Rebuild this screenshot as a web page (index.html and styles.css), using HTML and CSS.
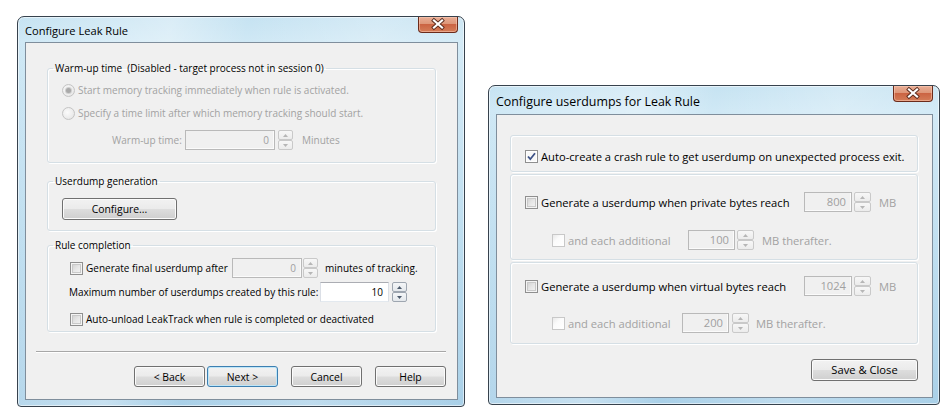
FILE: index.html
```html
<!DOCTYPE html>
<html>
<head>
<meta charset="utf-8">
<title>Configure Leak Rule</title>
<link rel="stylesheet" href="styles.css">
</head>
<body>
<section class="win win-leak">
  <header class="titlebar">
    <span class="title">Configure Leak Rule</span>
    <span class="close"><svg viewBox="0 0 40 16" width="40" height="16"><path d="M16 4.5L24 11.5M24 4.5L16 11.5" stroke="#5a2a1c" stroke-width="4" stroke-linecap="square" fill="none"/><path d="M16 4.5L24 11.5M24 4.5L16 11.5" stroke="#fff" stroke-width="2.2" stroke-linecap="square" fill="none"/></svg></span>
  </header>
  <div class="client client-leak">
    <fieldset class="group g-warm">
      <legend>Warm-up time&nbsp; (Disabled - target process not in session 0)</legend>
      <div class="rows">
        <div class="row dis"><span class="radio on"></span><span class="txt">Start memory tracking immediately when rule is activated.</span></div>
        <div class="row dis"><span class="radio"></span><span class="txt">Specify a time limit after which memory tracking should start.</span></div>
        <div class="row dis row-warm"><span class="lbl lw-warm">Warm-up time:</span><span class="input off iw-90">0</span><span class="spin off sp-3"><span class="sb"><svg viewBox="0 0 5 3" width="5" height="3"><path d="M0 3L2.5 0L5 3z"/></svg></span><span class="sb"><svg viewBox="0 0 5 3" width="5" height="3"><path d="M0 0L2.5 3L5 0z"/></svg></span></span><span class="unit u-9">Minutes</span></div>
      </div>
    </fieldset>
    <fieldset class="group g-dump">
      <legend>Userdump generation</legend>
      <div class="rows">
        <button class="btn btn-configure" type="button">Configure...</button>
      </div>
    </fieldset>
    <fieldset class="group g-comp">
      <legend>Rule completion</legend>
      <div class="rows">
        <div class="row"><span class="check"></span><span class="lbl lw-final">Generate final userdump after</span><span class="input off iw-70">0</span><span class="spin off sp-1"><span class="sb"><svg viewBox="0 0 5 3" width="5" height="3"><path d="M0 3L2.5 0L5 3z"/></svg></span><span class="sb"><svg viewBox="0 0 5 3" width="5" height="3"><path d="M0 0L2.5 3L5 0z"/></svg></span></span><span class="unit u-7">minutes of tracking.</span></div>
        <div class="row row-max"><span class="lbl lw-max">Maximum number of userdumps created by this rule:</span><span class="input iw-69">10</span><span class="spin sp-3"><span class="sb"><svg viewBox="0 0 5 3" width="5" height="3"><path d="M0 3L2.5 0L5 3z"/></svg></span><span class="sb"><svg viewBox="0 0 5 3" width="5" height="3"><path d="M0 0L2.5 3L5 0z"/></svg></span></span></div>
        <div class="row row-unload"><span class="check"></span><span class="txt">Auto-unload LeakTrack when rule is completed or deactivated</span></div>
      </div>
    </fieldset>
    <div class="separator"></div>
    <div class="buttons">
      <button class="btn btn-nav" type="button">&lt; Back</button>
      <button class="btn btn-nav btn-default" type="button">Next &gt;</button>
      <button class="btn btn-nav btn-gap" type="button">Cancel</button>
      <button class="btn btn-nav btn-gap" type="button">Help</button>
    </div>
  </div>
</section>

<section class="win win-dump">
  <header class="titlebar titlebar-tall">
    <span class="title">Configure userdumps for Leak Rule</span>
    <span class="close"><svg viewBox="0 0 40 16" width="40" height="16"><path d="M16 4.5L24 11.5M24 4.5L16 11.5" stroke="#5a2a1c" stroke-width="4" stroke-linecap="square" fill="none"/><path d="M16 4.5L24 11.5M24 4.5L16 11.5" stroke="#fff" stroke-width="2.2" stroke-linecap="square" fill="none"/></svg></span>
  </header>
  <div class="client client-dump">
    <div class="box box-a">
      <div class="row"><span class="check on"><svg viewBox="0 0 11 11" width="11" height="11"><path d="M2 5.5L4.3 8.2L9 2.2" stroke="#3d5287" stroke-width="1.8" fill="none"/></svg></span><span class="txt">Auto-create a crash rule to get userdump on unexpected process exit.</span></div>
    </div>
    <div class="box box-b">
      <div class="row"><span class="check"></span><span class="lbl lw-bytes">Generate a userdump when private bytes reach</span><span class="input off iw-48">800</span><span class="spin off spw-17 sp-2"><span class="sb"><svg viewBox="0 0 5 3" width="5" height="3"><path d="M0 3L2.5 0L5 3z"/></svg></span><span class="sb"><svg viewBox="0 0 5 3" width="5" height="3"><path d="M0 0L2.5 3L5 0z"/></svg></span></span><span class="unit dis-t u-8">MB</span></div>
      <div class="row row-sub"><span class="check off"></span><span class="lbl dis-t lw-add1">and each additional</span><span class="input off iw-47">100</span><span class="spin off spw-17 sp-2"><span class="sb"><svg viewBox="0 0 5 3" width="5" height="3"><path d="M0 3L2.5 0L5 3z"/></svg></span><span class="sb"><svg viewBox="0 0 5 3" width="5" height="3"><path d="M0 0L2.5 3L5 0z"/></svg></span></span><span class="unit dis-t u-8">MB therafter.</span></div>
    </div>
    <div class="box box-c">
      <div class="row"><span class="check"></span><span class="lbl lw-bytes">Generate a userdump when virtual bytes reach</span><span class="input off iw-48">1024</span><span class="spin off spw-17 sp-2"><span class="sb"><svg viewBox="0 0 5 3" width="5" height="3"><path d="M0 3L2.5 0L5 3z"/></svg></span><span class="sb"><svg viewBox="0 0 5 3" width="5" height="3"><path d="M0 0L2.5 3L5 0z"/></svg></span></span><span class="unit dis-t u-8">MB</span></div>
      <div class="row row-sub"><span class="check off"></span><span class="lbl dis-t lw-add2">and each additional</span><span class="input off iw-47">200</span><span class="spin off spw-17 sp-3"><span class="sb"><svg viewBox="0 0 5 3" width="5" height="3"><path d="M0 3L2.5 0L5 3z"/></svg></span><span class="sb"><svg viewBox="0 0 5 3" width="5" height="3"><path d="M0 0L2.5 3L5 0z"/></svg></span></span><span class="unit dis-t u-7">MB therafter.</span></div>
    </div>
    <button class="btn btn-save" type="button">Save &amp; Close</button>
  </div>
</section>
</body>
</html>
```
FILE: styles.css
```css
* { box-sizing: border-box; }
html, body { margin: 0; padding: 0; }
body {
  width: 951px;
  height: 411px;
  background: #ffffff;
  position: relative;
  overflow: hidden;
  font-family: "Open Sans", "Noto Sans", sans-serif;
  font-size: 11.2px;
  color: #000;
}

/* ---------- window frame ---------- */
.win {
  position: absolute;
  display: flex;
  flex-direction: column;
  border: 1px solid #37424d;
  border-radius: 7px 7px 4px 4px;
  padding: 0 6px 6px 7px;
  background:
    linear-gradient(100deg, rgba(255,255,255,0) 0, rgba(255,255,255,0.35) 30%, rgba(255,255,255,0) 45%, rgba(255,255,255,0.25) 70%, rgba(255,255,255,0) 100%),
    linear-gradient(180deg, #c6e3f2 0, #cfe8f5 24px, #b9dbee 60%, #a9d0e8 100%);
  box-shadow: inset 0 0 0 1px rgba(255,255,255,0.55);
}
.win-leak { left: 17px; top: 16px; width: 448px; height: 391px; font-size: 10px; }
.win-dump { left: 488px; top: 85px; width: 452px; height: 320px; }

.titlebar {
  height: 25px;
  flex: none;
  display: flex;
  justify-content: space-between;
}
.titlebar-tall { height: 28px; }
.title {
  align-self: center;
  color: #000;
  line-height: 14px;
  padding-top: 2px;
}
.win-leak .title { font-size: 11.1px; }
.win-dump .title { font-size: 12.4px; padding-top: 3px; }
.close {
  width: 40px;
  height: 16px;
  display: block;
  border: 1px solid #6b2b1b;
  border-top: none;
  border-radius: 0 0 4px 4px;
  background: linear-gradient(180deg, #e9ad95 0, #de9779 45%, #cb6443 50%, #d47d58 100%);
  box-shadow: inset 0 0 0 1px rgba(255,210,190,0.5);
}
.close svg { display: block; margin: -1px 0 0 -1px; }

.client {
  flex: 1;
  background: #f0f0f0;
  border: 1px solid #7f8e9c;
  display: flex;
  flex-direction: column;
}
.client-leak { padding: 18px 11px 11px 10px; }
.client-dump { padding: 20px 14px 0 13px; }

/* ---------- group boxes ---------- */
.group {
  margin: 0 10px 0 11px;
  padding: 0;
  min-width: 0;
  border: 1px solid #d5dfe5;
  border-radius: 3px;
  box-shadow: 1px 1px 0 #ffffff, inset 1px 1px 0 #ffffff;
}
.group legend {
  margin-left: 5px;
  padding: 0 2px;
  height: 14px;
  line-height: 14px;
  color: #000;
}
.rows { display: flex; flex-direction: column; }

.g-warm .rows { padding: 5px 0 12px 14px; gap: 3px; }
.g-warm .row-warm { margin-top: 4px; padding-left: 50px; }
.g-dump { margin-top: 11px; }
.g-dump .rows { padding: 10px 0 10px 14px; }
.g-comp { margin-top: 7px; }
.g-comp .rows { padding: 6px 0 2px 21px; gap: 4px; }
.g-comp .row .check { margin-left: 1px; }
.g-comp .row-unload { margin-top: 3px; }

.box {
  border: 1px solid #d5dfe5;
  border-radius: 3px;
  box-shadow: 1px 1px 0 #ffffff, inset 1px 1px 0 #ffffff;
  display: flex;
  flex-direction: column;
  padding-left: 14px;
}
.box-a { padding-top: 10px; padding-bottom: 5px; }
.box-b { margin-top: 2px; padding-top: 17px; padding-bottom: 9px; gap: 18px; }
.box-c { margin-top: 2px; padding-top: 13px; padding-bottom: 10px; gap: 17px; }
.row-sub { padding-left: 27px; }

/* ---------- rows ---------- */
.row {
  height: 20px;
  display: flex;
  align-items: center;
  white-space: nowrap;
}
.row .txt { margin-left: 3px; }
.row .check + .lbl { margin-left: 3px; }
.dis, .dis-t { color: #a2a2a2; }
.lbl { flex: none; }
.lw-warm { width: 73px; }
.lw-final { width: 146px; }
.lw-max { width: 251px; }
.lw-bytes { width: 263px; }
.lw-add1 { width: 120px; }
.lw-add2 { width: 114px; }
.unit { flex: none; }
.u-7 { margin-left: 7px; }
.u-8 { margin-left: 8px; }
.u-9 { margin-left: 9px; }

/* ---------- radio ---------- */
.radio {
  width: 13px;
  height: 13px;
  flex: none;
  border-radius: 50%;
  border: 1px solid #c4c4c4;
  background: radial-gradient(circle at 40% 40%, #fbfbfb 0, #ececec 60%, #dedede 100%);
  display: flex;
  align-items: center;
  justify-content: center;
}
.radio.on::after {
  content: "";
  width: 5px;
  height: 5px;
  border-radius: 50%;
  background: #a9a9a9;
  box-shadow: 0 0 0 1px #cfcfcf;
}

/* ---------- checkbox ---------- */
.check {
  width: 13px;
  height: 13px;
  flex: none;
  border: 1px solid #8f8f8f;
  background: #f4f4f4;
  box-shadow: inset 0 0 0 1px #f4f4f4, inset 0 0 0 2px #c9c9c9;
  background-image: linear-gradient(135deg, #cbcbcb 0, #e6e6e6 50%, #f7f7f7 100%);
  display: flex;
  align-items: center;
  justify-content: center;
}
.check.on {
  background: #f8f8f8;
  box-shadow: inset 0 0 0 1px #ffffff;
}
.check.on svg { display: block; }
.check.off {
  border-color: #c8c8c8;
  background: linear-gradient(135deg, #e9e9e9 0, #fbfbfb 40%, #ffffff 100%);
  box-shadow: none;
}

/* ---------- inputs & spinners ---------- */
.input {
  flex: none;
  height: 20px;
  border: 1px solid #abadb3;
  border-left-color: #dbdfe6;
  border-right-color: #dbdfe6;
  border-bottom-color: #e3e9ef;
  background: #ffffff;
  text-align: right;
  padding-right: 5px;
  line-height: 18px;
  color: #000;
}
.input.off {
  background: #f0f0f0;
  border: 1px solid #b9b9b9;
  box-shadow: inset -1px -1px 0 #fbfbfb;
  color: #a0a0a0;
}
.iw-90 { width: 90px; }
.iw-70 { width: 70px; }
.iw-69 { width: 69px; }
.iw-48 { width: 48px; }
.iw-47 { width: 47px; }

.spin {
  flex: none;
  width: 15px;
  height: 20px;
  display: flex;
  flex-direction: column;
}
.spw-17 { width: 17px; }
.sp-1 { margin-left: 1px; }
.sp-2 { margin-left: 2px; }
.sp-3 { margin-left: 3px; }
.sb {
  flex: 1;
  border: 1px solid #9ea6b0;
  border-radius: 2px;
  background: linear-gradient(180deg, #f4f6f8 0, #e4e8ec 100%);
  display: flex;
  align-items: center;
  justify-content: center;
}
.sb svg { display: block; fill: #4c5a6c; }
.spin.off .sb {
  border-color: #c9c9c9;
  background: linear-gradient(180deg, #f7f7f7 0, #ececec 100%);
}
.spin.off .sb svg { fill: #b6b6b6; }

/* ---------- buttons ---------- */
.btn {
  font: inherit;
  color: #000;
  height: 21px;
  padding: 0;
  border: 1px solid #707070;
  border-radius: 3px;
  background: linear-gradient(180deg, #f2f2f2 0, #ebebeb 48%, #dddddd 52%, #cfcfcf 100%);
  box-shadow: inset 0 0 0 1px #fbfbfb;
  line-height: 18px;
  text-align: center;
}
.win-leak .btn { font-size: 10.4px; }
.btn-configure { width: 115px; height: 22px; align-self: flex-start; }
.btn-default {
  border-color: #3c7fb1;
  box-shadow: inset 0 0 0 1px #bfe6f8;
}

.separator {
  margin-top: 19px;
  height: 2px;
  border-top: 1px solid #a7a7a7;
  border-bottom: 1px solid #ffffff;
}
.buttons {
  margin-top: 13px;
  display: flex;
  justify-content: flex-end;
  gap: 2px;
}
.btn-nav { width: 71px; }
.btn-gap { margin-left: 11px; }

.btn-save {
  align-self: flex-end;
  width: 107px;
  height: 22px;
  margin-top: 15px;
}
```
